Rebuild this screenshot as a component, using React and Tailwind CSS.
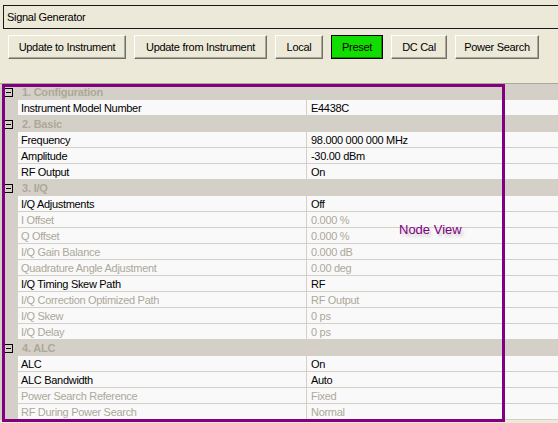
import { useState } from "react";

const rows = [
  { cat: "1. Configuration" },
  { name: "Instrument Model Number", value: "E4438C" },
  { cat: "2. Basic" },
  { name: "Frequency", value: "98.000 000 000 MHz" },
  { name: "Amplitude", value: "-30.00 dBm" },
  { name: "RF Output", value: "On" },
  { cat: "3. I/Q" },
  { name: "I/Q Adjustments", value: "Off" },
  { name: "I Offset", value: "0.000 %", off: true },
  { name: "Q Offset", value: "0.000 %", off: true },
  { name: "I/Q Gain Balance", value: "0.000 dB", off: true },
  { name: "Quadrature Angle Adjustment", value: "0.00 deg", off: true },
  { name: "I/Q Timing Skew Path", value: "RF" },
  { name: "I/Q Correction Optimized Path", value: "RF Output", off: true },
  { name: "I/Q Skew", value: "0 ps", off: true },
  { name: "I/Q Delay", value: "0 ps", off: true },
  { cat: "4. ALC" },
  { name: "ALC", value: "On" },
  { name: "ALC Bandwidth", value: "Auto" },
  { name: "Power Search Reference", value: "Fixed", off: true },
  { name: "RF During Power Search", value: "Normal", off: true },
];

const buttons = [
  { label: "Update to Instrument", w: "w-[118px]" },
  { label: "Update from Instrument", w: "w-[133px]" },
  { label: "Local", w: "w-[48px]" },
  { label: "Preset", w: "w-[52px]", active: true },
  { label: "DC Cal", w: "w-[56px]" },
  { label: "Power Search", w: "w-[84px]" },
];

function XpButton({ label, w, active }) {
  const look = active
    ? "bg-[#11dd00] border border-black shadow-[inset_-1px_-1px_0_#0a8a00]"
    : "bg-[#ece9d8] border border-t-white border-l-white border-r-[#716f64] border-b-[#716f64] shadow-[inset_-1px_-1px_0_#aca899]";
  return (
    <button className={`${w} h-[24px] ${look} text-[11px] tracking-[-0.3px] text-black flex items-center justify-center`}>
      {label}
    </button>
  );
}

function CategoryRow({ label }) {
  return (
    <div className="flex h-[16px] bg-[#d4d0c8] items-center">
      <div className="w-[18px] flex items-center">
        <div className="ml-[4px] w-[9px] h-[9px] border border-black flex items-center justify-center">
          <div className="w-[5px] h-[1px] bg-black" />
        </div>
      </div>
      <span className="pl-[4px] pt-[1px] font-bold text-[11px] leading-[15px] tracking-[-0.2px] text-[#aca899]">{label}</span>
    </div>
  );
}

function PropRow({ name, value, off }) {
  const color = off ? "text-[#aca899]" : "text-black";
  return (
    <div className="flex h-[16px]">
      <div className="w-[18px] bg-[#d4d0c8]" />
      <div className={`w-[289px] bg-[#f9f9f9] border-b border-r border-[#d4d0c8] pl-[3px] pt-[1px] text-[11px] leading-[15px] tracking-[-0.3px] ${color}`}>
        {name}
      </div>
      <div className={`flex-1 bg-[#f9f9f9] border-b border-[#d4d0c8] pl-[4px] pt-[1px] text-[11px] leading-[15px] tracking-[-0.3px] ${color}`}>
        {value}
      </div>
    </div>
  );
}

export default function App() {
  const [data] = useState(rows);

  return (
    <div className="w-[558px] h-[423px] bg-[#ece9d8] overflow-hidden flex flex-col font-['Liberation_Sans',Arial,sans-serif]">
      <div className="mt-[5px] ml-[3px] h-[24px] border border-r-0 border-[#1a1a1a] flex items-center pl-[3px] text-[11px] tracking-[-0.3px] text-black">
        Signal Generator
      </div>

      <div className="mt-[6px] ml-[8px] flex gap-2">
        {buttons.map((b) => (
          <XpButton key={b.label} {...b} />
        ))}
      </div>

      <div className="relative mt-[24px] border-t border-[#aca899]">
        {data.map((r, i) =>
          r.cat ? <CategoryRow key={i} label={r.cat} /> : <PropRow key={i} {...r} />
        )}

        {/* node view overlay */}
        <div className="absolute left-[2px] top-0 w-[503px] h-[338px] border-[3px] border-[#800080] pointer-events-none">
          <span className="absolute left-[394px] top-[133px] text-[13px] text-[#800080] [text-shadow:2px_3px_3px_rgba(0,0,0,0.18)]">
            Node View
          </span>
        </div>
      </div>
    </div>
  );
}
